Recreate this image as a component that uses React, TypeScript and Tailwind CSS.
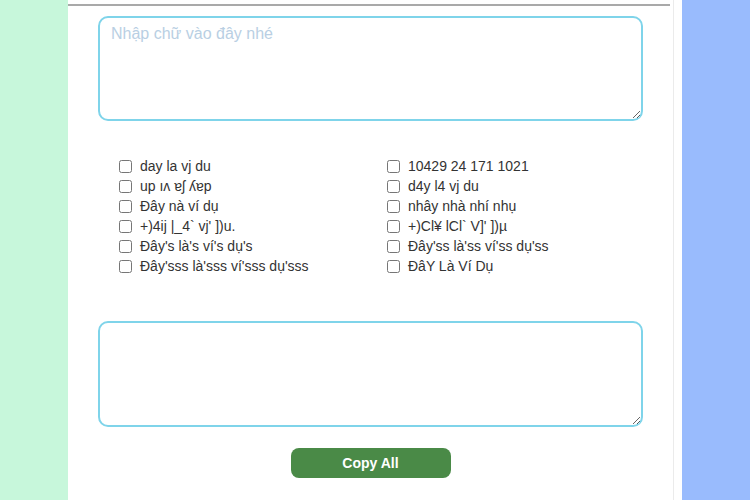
import React from "react";

const left = [
  "day la vj du",
  "up ıʌ ɐʃ ʎɐp",
  "Đây nà ví dụ",
  "+)4ij |_4` vj' ])u.",
  "Đây's là's ví's dụ's",
  "Đây'sss là'sss ví'sss dụ'sss",
];
const right = [
  "10429 24 171 1021",
  "d4y l4 vj du",
  "nhây nhà nhí nhụ",
  "+)Cl¥ lCl` V]' ])µ",
  "Đây'ss là'ss ví'ss dụ'ss",
  "ĐâY Là Ví Dụ",
];

function Item({ label }: { label: string }) {
  return (
    <label className="flex items-center h-[20px]">
      <input type="checkbox" className="m-0 w-[13px] h-[13px] mr-[8px]" />
      <span className="text-[14px] text-[#333333]">{label}</span>
    </label>
  );
}

export default function App() {
  return (
    <div
      className="flex w-[750px] h-[500px] overflow-hidden"
      style={{ fontFamily: '"Liberation Sans", Arial, sans-serif' }}
    >
      <div className="w-[68px] shrink-0 bg-[#c7f7db]" />
      <div className="w-[614px] shrink-0 bg-white">
        <div className="w-[606px] h-full border-r border-[#ebebeb] pt-[4px]">
          <div className="w-[602px] h-[2px] bg-[#a9a9a9]" />
          <div className="ml-[30px] w-[545px] mt-[10px]">
            <textarea
              placeholder="Nhập chữ vào đây nhé"
              className="block w-[545px] h-[105px] rounded-[10px] border-2 border-[#7fd4ea] px-[11px] pt-[4px] pb-[7px] text-[16px] text-[#333] placeholder:text-[#b9cfe3] outline-none"
            />
          </div>
          <div className="ml-[51px] mt-[35px] grid grid-cols-[268px_268px]">
            <div className="flex flex-col">
              {left.map((l) => (
                <Item key={l} label={l} />
              ))}
            </div>
            <div className="flex flex-col">
              {right.map((l) => (
                <Item key={l} label={l} />
              ))}
            </div>
          </div>
          <div className="ml-[30px] w-[545px] mt-[45px]">
            <textarea className="block w-[545px] h-[106px] rounded-[10px] border-2 border-[#7fd4ea] px-[11px] py-[7px] text-[16px] outline-none" />
            <div className="flex justify-center mt-[21px]">
              <button className="w-[160px] h-[30px] rounded-[8px] bg-[#4a8a47] text-white font-bold text-[14px]">
                Copy All
              </button>
            </div>
          </div>
        </div>
      </div>
      <div className="flex-1 bg-[#99bbfd]" />
    </div>
  );
}
